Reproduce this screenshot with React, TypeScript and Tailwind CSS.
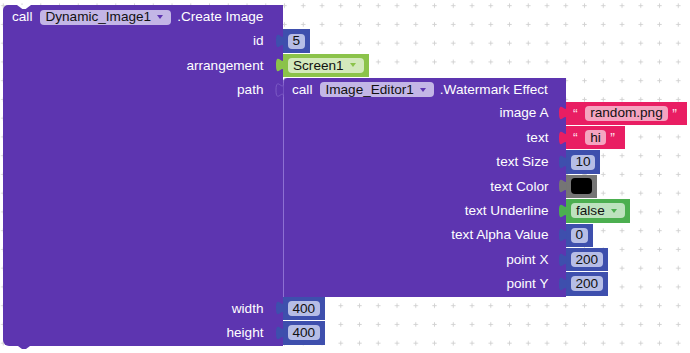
import React from "react";

const PURPLE = "#5d35b0";
const BLUE = "#3e4fad";
const MAGENTA = "#e91e63";
const LIME = "#8bc34a";
const GREEN = "#4caf50";
const GRAY = "#757575";

function Grid() {
	return (
		<svg className="absolute inset-0" width="690" height="353">
			<defs>
				<pattern
					id="grid"
					width="18.75"
					height="18.75"
					patternUnits="userSpaceOnUse"
					x="-6.1"
					y="-3.7"
				>
					<path
						d="M7.2 9.375 H11.55 M9.375 7.2 V11.55"
						stroke="#d2d2d2"
						strokeWidth="1"
					/>
				</pattern>
			</defs>
			<rect width="690" height="353" fill="url(#grid)" />
		</svg>
	);
}

// output connector sticking out on the left of a value block
function Tab({ fill, stroke }: { fill: string; stroke?: string }) {
	return (
		<svg
			width="7.5"
			height="14.1"
			viewBox="0 0 8 15"
			className="absolute left-[-7.5px] top-[4.7px] overflow-visible"
		>
			<path
				d="M8 0 C8 10 0 -8 0 7.5 S8 5 8 15"
				fill={fill}
				stroke={stroke ?? "none"}
				strokeWidth="0.9"
			/>
		</svg>
	);
}

function Arrow({ color }: { color: string }) {
	return (
		<svg width="6" height="4" viewBox="0 0 6 4" className="ml-[6px] mr-[8px]">
			<path d="M0 0 H6 L3 4 Z" fill={color} />
		</svg>
	);
}

function Dropdown({
	label,
	pill,
	arrow,
}: {
	label: string;
	pill: string;
	arrow: string;
}) {
	return (
		<span
			className={`flex h-[15px] items-center rounded-[4px] pl-[5px] text-[#111] ${pill}`}
		>
			{label}
			<Arrow color={arrow} />
		</span>
	);
}

function Num({ value }: { value: string }) {
	return (
		<div className="relative flex h-[23.4px] items-center bg-[#3e4fad] px-[5px]">
			<Tab fill={BLUE} />
			<span className="flex h-[15px] items-center rounded-[4px] bg-[#b6bde6] px-[4.5px] text-[#111]">
				{value}
			</span>
		</div>
	);
}

function Str({ text }: { text: string }) {
	return (
		<div className="relative flex h-[23.4px] items-center bg-[#e91e63] pl-[7px] pr-[10px]">
			<Tab fill={MAGENTA} />
			<span className="self-start pt-[5px] text-[14px] text-[#fde4ee]">“</span>
			<span className="ml-[7px] flex h-[15px] items-center rounded-[4px] bg-[#f5a4c0] px-[5.5px] text-[#111]">
				{text}
			</span>
			<span className="ml-[4px] self-start pt-[5px] text-[14px] text-[#fde4ee]">”</span>
		</div>
	);
}

function ColorBlock() {
	return (
		<div className="relative flex h-[23.4px] items-center bg-[#757575] px-[5px]">
			<Tab fill={GRAY} />
			<span className="h-[16px] w-[20.5px] rounded-[4px] bg-black" />
		</div>
	);
}

function OuterRow({
	label,
	last,
	children,
}: {
	label: string;
	last?: boolean;
	children: React.ReactNode;
}) {
	return (
		<div className="flex h-[24.4px] items-start">
			<div
				className={`flex h-full w-[280px] justify-end bg-[#5d35b0] pr-[19.5px] text-white ${last ? "rounded-bl-[6px]" : ""}`}
			>
				<span className="flex h-[23.4px] items-center">{label}</span>
			</div>
			{children}
		</div>
	);
}

function InnerRow({
	label,
	children,
}: {
	label: string;
	children: React.ReactNode;
}) {
	return (
		<div className="flex h-[24.4px] items-start">
			<div className="flex h-full w-[283px] justify-end border-l border-[#8d70d2] bg-[#5d35b0] pr-[17.5px] text-white">
				<span className="flex h-[23.4px] items-center">{label}</span>
			</div>
			{children}
		</div>
	);
}

function WatermarkBlock() {
	return (
		<div className="relative flex flex-col">
			<Tab fill={PURPLE} stroke="#8163c8" />
			<div className="flex h-[23.4px] w-[283px] items-center rounded-tl-[4px] border-l border-[#8d70d2] bg-[#5d35b0] pl-[8px] text-white">
				<span>call</span>
				<span className="ml-[8px]">
					<Dropdown label="Image_Editor1" pill="bg-[#c3b6e6]" arrow={PURPLE} />
				</span>
				<span className="ml-[6px]">.Watermark Effect</span>
			</div>
			<InnerRow label="image A">
				<Str text="random.png" />
			</InnerRow>
			<InnerRow label="text">
				<Str text="hi" />
			</InnerRow>
			<InnerRow label="text Size">
				<Num value="10" />
			</InnerRow>
			<InnerRow label="text Color">
				<ColorBlock />
			</InnerRow>
			<InnerRow label="text Underline">
				<div className="relative flex h-[23.4px] items-center bg-[#4caf50] px-[5px]">
					<Tab fill={GREEN} />
					<Dropdown label="false" pill="bg-[#bde2be]" arrow={GREEN} />
				</div>
			</InnerRow>
			<InnerRow label="text Alpha Value">
				<Num value="0" />
			</InnerRow>
			<InnerRow label="point X">
				<Num value="200" />
			</InnerRow>
			<InnerRow label="point Y">
				<Num value="200" />
			</InnerRow>
		</div>
	);
}

function CreateImageBlock() {
	return (
		<div className="relative flex flex-col">
			{/* previous-statement notch and next-statement tab */}
			<div className="absolute left-[14px] top-0 z-10 h-[4px] w-[14px] bg-white [clip-path:polygon(0_0,100%_0,62%_100%,38%_100%)]" />
			<div className="absolute bottom-[-3.6px] left-[14px] h-[4px] w-[14px] bg-[#5d35b0] [clip-path:polygon(0_0,100%_0,62%_100%,38%_100%)]" />

			<div className="flex h-[24.4px] w-[280px] items-center rounded-tl-[5px] bg-[#5d35b0] pl-[9px] text-white">
				<span>call</span>
				<span className="ml-[8px]">
					<Dropdown label="Dynamic_Image1" pill="bg-[#c3b6e6]" arrow={PURPLE} />
				</span>
				<span className="ml-[6px]">.Create Image</span>
			</div>
			<OuterRow label="id">
				<Num value="5" />
			</OuterRow>
			<OuterRow label="arrangement">
				<div className="relative flex h-[23.4px] items-center bg-[#8bc34a] px-[5px]">
					<Tab fill={LIME} />
					<Dropdown label="Screen1" pill="bg-[#d3e9bc]" arrow={LIME} />
				</div>
			</OuterRow>
			<div className="flex items-start">
				<div className="flex h-[218.6px] w-[280px] justify-end bg-[#5d35b0] pr-[19.5px] text-white">
					<span className="flex h-[23.4px] items-center">path</span>
				</div>
				<WatermarkBlock />
			</div>
			<OuterRow label="width">
				<Num value="400" />
			</OuterRow>
			<OuterRow label="height" last>
				<Num value="400" />
			</OuterRow>
		</div>
	);
}

export default function App() {
	return (
		<div className="relative h-[353px] w-[690px] overflow-hidden bg-white font-['Liberation_Sans',Arial,sans-serif] text-[13.6px] leading-none">
			<Grid />
			<div className="absolute left-[3px] top-[5px]">
				<CreateImageBlock />
			</div>
		</div>
	);
}
